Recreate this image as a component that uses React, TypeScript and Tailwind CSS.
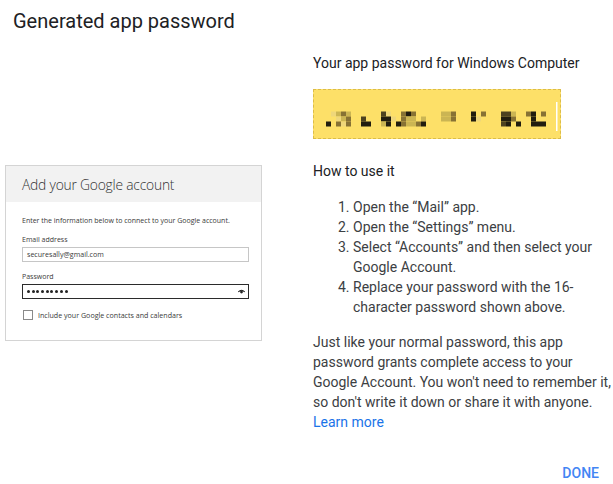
import React from "react";

type B = [number, number, string];

const K = "#211d0f";
const D = "#4d4220";
const O = "#877234";
const T = "#cbb553";
const L = "#efd77a";

const rows: B[][] = [
  [
    [1, 0, L], [2, 0, T], [3, 0, O], [4, 0, T], [11, 0, D], [12, 0, L], [15, 0, O], [16, 0, K], [17, 0, O],
    [23, 0, T], [24, 0, T], [25, 0, O], [29, 0, K], [31, 0, O], [35, 0, D], [36, 0, D], [37, 0, T],
    [40, 0, O], [41, 0, K], [43, 0, O],
  ],
  [
    [2, 1, L], [3, 1, T], [4, 1, O], [7, 1, D], [11, 1, K], [12, 1, K], [13, 1, L], [15, 1, O], [16, 1, T],
    [17, 1, T], [19, 1, T], [23, 1, T], [24, 1, T], [25, 1, O], [29, 1, K], [30, 1, L], [35, 1, K],
    [36, 1, K], [37, 1, O], [41, 1, K],
  ],
  [
    [0, 2, K], [2, 2, O], [3, 2, L], [4, 2, O], [7, 2, K], [8, 2, K], [11, 2, T], [12, 2, K], [14, 2, K],
    [15, 2, O], [16, 2, T], [17, 2, T], [18, 2, O], [19, 2, K], [35, 2, D], [36, 2, K], [38, 2, K],
    [41, 2, K], [42, 2, K], [43, 2, K],
  ],
];

function Pixelated() {
  return (
    <svg width="246" height="48" viewBox="0 0 246 48" className="block">
      {rows.flat().map(([c, r, col], i) => (
        <rect key={i} x={12 + c * 5} y={21.5 + r * 5} width={5} height={5} fill={col} />
      ))}
      <rect x={242} y={12} width={1.5} height={29} fill="#ffffff" />
    </svg>
  );
}

function GoogleCard() {
  return (
    <div className="w-[257px] h-[176px] border border-[#d4d4d4] bg-white">
      <div className="h-[36px] bg-[#f2f2f2] pl-[16px] flex items-center pt-[2px]">
        <span className="font-['Open_Sans',sans-serif] font-light text-[13.8px] text-[#333] tracking-[-0.2px]">
          Add your Google account
        </span>
      </div>
      <div className="pl-[16px] pr-[12px] pt-[14px] font-['Open_Sans',sans-serif] text-[#3a3a3a]">
        <div className="h-[10px] leading-[10px] text-[7px] whitespace-nowrap">
          Enter the information below to connect to your Google account.
        </div>
        <div className="mt-[9px] h-[10px] leading-[10px] text-[7px]">Email address</div>
        <div className="mt-[2px] h-[15px] border border-[#c6c6c6] flex items-center pl-[4px] text-[7.1px]">
          securesally@gmail.com
        </div>
        <div className="mt-[10px] h-[10px] leading-[10px] text-[7px]">Password</div>
        <div className="mt-[2px] h-[15px] border-[1.5px] border-[#2b2b2b] flex items-center pl-[4px] pr-[3px] justify-between">
          <div className="flex gap-[1.7px]">
            {Array.from({ length: 9 }).map((_, i) => (
              <span key={i} className="w-[3px] h-[3px] rounded-full bg-[#222]" />
            ))}
          </div>
          <svg width="7" height="5" viewBox="0 0 7 5">
            <path d="M0.3 3 Q3.5 -0.6 6.7 3" stroke="#222" strokeWidth="1.1" fill="none" />
            <circle cx="3.5" cy="3" r="1.4" fill="#222" />
          </svg>
        </div>
        <div className="mt-[11px] h-[10px] flex items-center gap-[5px]">
          <span className="ml-[1px] w-[10px] h-[10px] border border-[#8a8a8a] bg-white" />
          <span className="text-[7.1px] leading-[10px]">Include your Google contacts and calendars</span>
        </div>
      </div>
    </div>
  );
}

export default function App() {
  return (
    <div className="w-[613px] h-[484px] bg-white font-['Roboto',sans-serif] overflow-hidden">
      <h1 className="pl-[13px] pt-[9px] text-[20px] leading-[24px] text-[#202124] font-normal">
        Generated app password
      </h1>
      <div className="flex">
        <div className="w-[313px] flex-none pl-[5px] pt-[132px]">
          <GoogleCard />
        </div>
        <div className="w-[300px] flex-none pt-[20px] text-[14px] leading-[20px]">
          <p className="text-[#202124]">Your app password for Windows Computer</p>
          <div className="mt-[16px] w-[248px] h-[50px] bg-[#fde068] border border-dashed border-[#dcbc48]">
            <Pixelated />
          </div>
          <p className="mt-[22px] text-[#202124]">How to use it</p>
          <ol className="mt-[16px] pl-[40px] list-decimal text-[#3c4043]">
            <li>Open the “Mail” app.</li>
            <li>Open the “Settings” menu.</li>
            <li>Select “Accounts” and then select your Google Account.</li>
            <li>Replace your password with the 16-character password shown above.</li>
          </ol>
          <p className="mt-[15px] text-[#3c4043]">
            Just like your normal password, this app password grants complete access to your Google
            Account. You won't need to remember it, so don't write it down or share it with anyone.{" "}
            <span className="text-[#1a73e8]">Learn more</span>
          </p>
        </div>
      </div>
      <div className="flex justify-end pr-[14px] mt-[31px]">
        <span className="text-[14px] leading-[20px] font-medium text-[#4285f4]">DONE</span>
      </div>
    </div>
  );
}
